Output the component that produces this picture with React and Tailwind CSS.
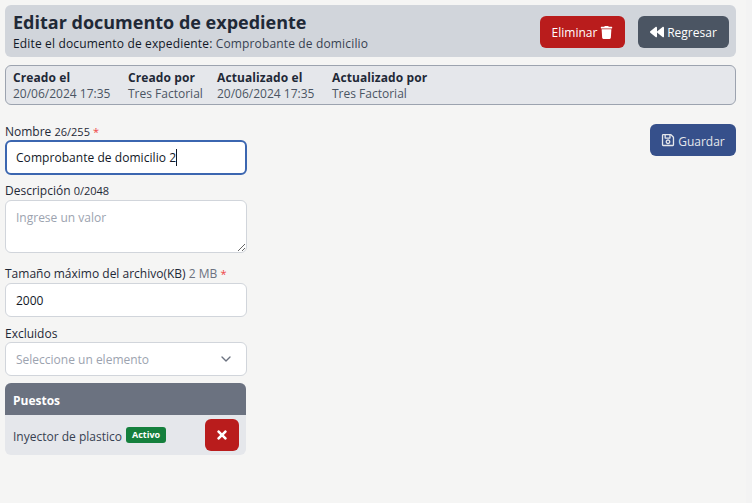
import { FaTrash, FaBackward, FaRegSave, FaTimes } from "react-icons/fa";
import { LuChevronDown } from "react-icons/lu";

function InfoCol({ title, value, className }) {
  return (
    <div className={`flex flex-col whitespace-nowrap ${className}`}>
      <span className="font-bold tracking-[0.1px] text-[#1f2937] leading-[16px]">{title}</span>
      <span className="text-[#4b5563] leading-[16px]">{value}</span>
    </div>
  );
}

export default function App() {
  return (
    <div className="flex min-h-[503px] w-[752px] bg-[#f5f5f4] font-['Open_Sans',sans-serif] text-[12px] text-[#1f2937]">
      <div className="w-[746px] pl-[5px] pr-[10px] pt-[5px]">
        <div className="flex h-[52px] items-center justify-between rounded-md bg-[#d1d5db] pl-[8px] pr-[7px]">
          <div className="flex flex-col">
            <h1 className="mb-[2px] text-[18px] font-bold leading-[24px] text-[#1f2937]">Editar documento de expediente</h1>
            <p className="text-[12px] leading-[16px] tracking-[0.15px] text-[#111827]">
              Edite el documento de expediente: <span className="text-[#374151]">Comprobante de domicilio</span>
            </p>
          </div>
          <div className="mt-[2px] flex items-center gap-[13px]">
            <button className="flex h-[32px] w-[85px] items-center justify-center gap-[3px] rounded-md bg-[#b91c1c] text-white">
              <span className="pt-[1px]">Eliminar</span> <FaTrash className="text-[13px]" />
            </button>
            <button className="flex h-[32px] w-[91px] items-center justify-center gap-[3px] rounded-md bg-[#4b5563] text-white">
              <FaBackward className="text-[14px]" /> <span className="pt-[1px]">Regresar</span>
            </button>
          </div>
        </div>

        <div className="mt-[8px] flex h-[40px] items-center gap-[16px] rounded-md border border-[#9ca3af] bg-[#e5e7eb] px-[7px] pt-[2px]">
          <InfoCol className="w-[99px]" title="Creado el" value="20/06/2024 17:35" />
          <InfoCol className="w-[73px]" title="Creado por" value="Tres Factorial" />
          <InfoCol className="w-[99px]" title="Actualizado el" value="20/06/2024 17:35" />
          <InfoCol title="Actualizado por" value="Tres Factorial" />
        </div>

        <div className="mt-[19px] flex items-start justify-between">
          <div className="flex w-[242px] flex-col">
            <label className="leading-[16px]">
              Nombre <span className="text-[11px]">26/255</span> <span className="text-[11px] text-[#ef4444]">*</span>
            </label>
            <div className="flex h-[35px] items-center rounded-md border-2 border-[#3b66b0] bg-white pl-[9px] tracking-[0.05px] text-[#111827]">
              Comprobante de domicilio 2<span className="h-[17px] w-px bg-[#111827]" />
            </div>

            <label className="mt-[8px] leading-[16px]">
              Descripción <span className="text-[11px]">0/2048</span>
            </label>
            <textarea
              readOnly
              placeholder="Ingrese un valor"
              className="mt-[1px] h-[53px] w-full rounded-md border border-[#d1d5db] bg-white px-[10px] py-[9px] leading-[16px] placeholder:text-[#9ca3af]"
            />

            <label className="mt-[13px] leading-[16px]">
              Tamaño máximo del archivo(KB) <span className="text-[#6b7280]">2 MB</span> <span className="text-[11px] text-[#ef4444]">*</span>
            </label>
            <div className="mt-[1px] flex h-[34px] items-center rounded-md border border-[#d1d5db] bg-white pl-[10px] pt-[2px] text-[#111827]">
              2000
            </div>

            <label className="mt-[9px] leading-[16px]">Excluidos</label>
            <div className="flex h-[34px] items-center justify-between rounded-md border border-[#d1d5db] bg-white pl-[10px] pr-[12px] text-[#9ca3af]">
              <span className="pt-[2px]">Seleccione un elemento</span>
              <LuChevronDown className="text-[16px] text-[#6b7280]" />
            </div>

            <div className="mt-[7px] w-[241px] overflow-hidden rounded-md bg-[#e5e7eb]">
              <div className="flex h-[32px] items-center bg-[#6b7280] px-[8px] pt-[4px] font-bold text-white">Puestos</div>
              <div className="flex h-[40px] items-center justify-between pl-[8px] pr-[7px]">
                <div className="flex items-center gap-[4px] text-[#374151]">
                  <span className="pt-[3px]">Inyector de plastico</span>
                  <span className="flex h-[16px] items-center rounded-[3px] bg-[#15803d] px-[6px] text-[9px] font-bold text-white">Activo</span>
                </div>
                <button className="flex h-[32px] w-[34px] items-center justify-center rounded-md bg-[#b91c1c] text-white">
                  <FaTimes className="text-[14px]" />
                </button>
              </div>
            </div>
          </div>

          <button className="flex h-[32px] w-[86px] items-center justify-center gap-[3px] rounded-md bg-[#36508b] text-[#e5e7eb]">
            <FaRegSave className="text-[14px]" /> <span className="pt-[3px]">Guardar</span>
          </button>
        </div>
      </div>
      <div className="w-[6px] bg-[#f3f3f3]" />
    </div>
  );
}
